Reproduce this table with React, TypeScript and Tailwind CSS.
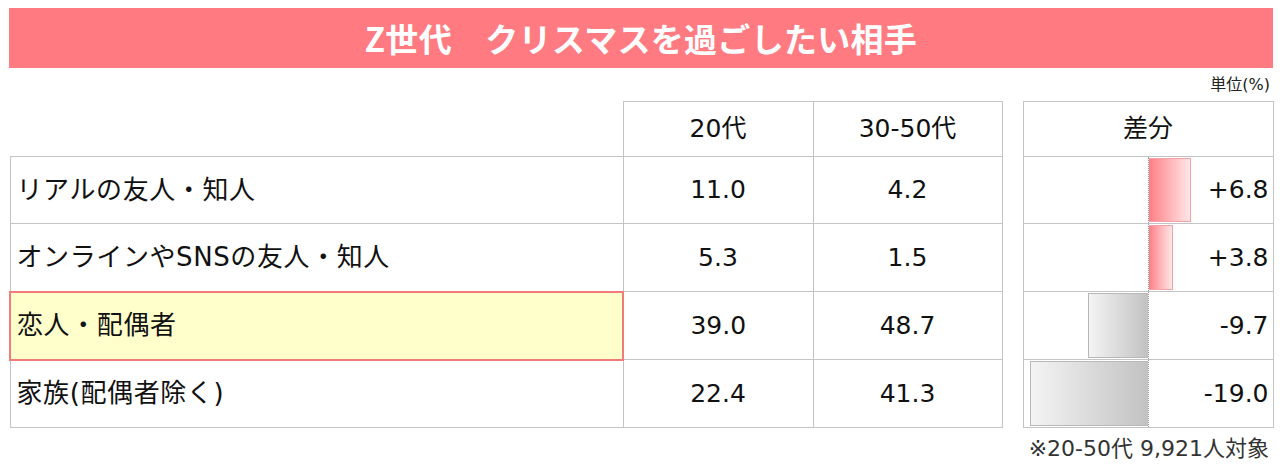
const font = { fontFamily: '"DejaVu Sans", "Noto Sans CJK JP", sans-serif' };

const rows = [
  { label: "リアルの友人・知人", a: "11.0", b: "4.2", diff: 6.8, text: "+6.8" },
  { label: "オンラインやSNSの友人・知人", a: "5.3", b: "1.5", diff: 3.8, text: "+3.8" },
  { label: "恋人・配偶者", a: "39.0", b: "48.7", diff: -9.7, text: "-9.7", hl: true },
  { label: "家族(配偶者除く)", a: "22.4", b: "41.3", diff: -19.0, text: "-19.0" },
];

const heights = ["h-[67px]", "h-[68px]", "h-[68px]", "h-[68px]"];

export default function App() {
  return (
    <div className="w-[1280px] h-[470px] bg-white text-[#111]" style={font}>
      <div className="pt-[8px] pl-[9px]">
        <div className="w-[1264px] h-[60px] bg-[#ff7b81] flex items-center justify-center">
          <h1 className="text-white font-bold text-[33px] leading-none tracking-[0.3px]" style={{ fontFamily: '"Noto Sans CJK JP", sans-serif' }}>
            Z世代　クリスマスを過ごしたい相手
          </h1>
        </div>
        <div className="w-[1264px] h-[33px] flex items-center justify-end pr-[3px] text-[16px] text-[#222]">
          単位(%)
        </div>

        <div className="flex gap-[20px] items-start">
          {/* left table */}
          <table className="w-[992px] table-fixed text-[25px]">
            <colgroup>
              <col className="w-[613px]" />
              <col className="w-[190px]" />
              <col className="w-[189px]" />
            </colgroup>
            <thead>
              <tr className="h-[55px]">
                <th className="border-b border-[#c4c4c4]"></th>
                <th className="border border-[#c4c4c4] font-normal">20代</th>
                <th className="border border-[#c4c4c4] font-normal">30-50代</th>
              </tr>
            </thead>
            <tbody>
              {rows.map((r, i) => (
                <tr key={r.label} className={heights[i]}>
                  <td
                    className={
                      r.hl
                        ? "border-2 border-[#f27c7c] bg-[#ffffcb] pl-[6px] text-left text-[26px] tracking-[0.6px]"
                        : "border border-[#c4c4c4] pl-[6px] text-left text-[26px] tracking-[0.6px]"
                    }
                  >
                    {r.label}
                  </td>
                  <td className="border border-[#c4c4c4] text-center">{r.a}</td>
                  <td className="border border-[#c4c4c4] text-center">{r.b}</td>
                </tr>
              ))}
            </tbody>
          </table>

          {/* diff table */}
          <div className="w-[251px] flex flex-col">
            <div className="h-[56px] border border-[#c4c4c4] flex items-center justify-center text-[25px]">
              差分
            </div>
            {rows.map((r, i) => (
              <div key={r.label} className={`${heights[i]} border border-t-0 border-[#c4c4c4] flex text-[25px]`}>
                <div className="w-[124px] flex justify-end pt-[1px] pb-[1px]">
                  {r.diff < 0 && (
                    <div
                      className="h-full border border-r-0 border-[#b8b8b8] bg-gradient-to-r from-[#f4f4f4] to-[#c2c2c2]"
                      style={{ width: Math.round(-r.diff * 6.2) }}
                    />
                  )}
                </div>
                <div className="flex-1 flex items-center border-l border-dotted border-[#9a9a9a]">
                  {r.diff > 0 && (
                    <div
                      className="self-stretch mt-[1px] mb-[1px] border border-l-0 border-[#f3a3a8] bg-gradient-to-r from-[#ff7e87] to-[#ffe6e8]"
                      style={{ width: Math.round(r.diff * 6.2) }}
                    />
                  )}
                  <span className="ml-auto pr-[4px]">{r.text}</span>
                </div>
              </div>
            ))}
          </div>
        </div>

        <div className="w-[1264px] h-[40px] flex items-center justify-end pr-[4px] text-[22px] text-[#333]">
          ※20-50代 9,921人対象
        </div>
      </div>
    </div>
  );
}
